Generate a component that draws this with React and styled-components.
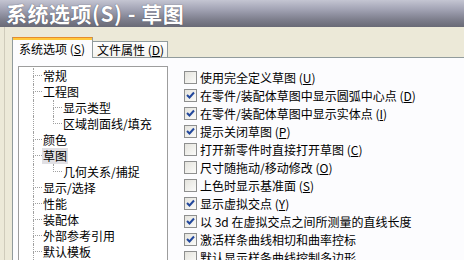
import React from 'react';
import styled, { createGlobalStyle } from 'styled-components';

const GlobalStyle = createGlobalStyle`
  html, body {
    margin: 0;
    padding: 0;
    overflow: hidden;
    background: #ece9d8;
  }
  body {
    font-family: "Noto Sans CJK SC", "Liberation Sans", sans-serif;
    font-size: 12px;
    color: #000;
  }
`;

const treeItems = [
  { label: '常规', level: 0 },
  { label: '工程图', level: 0 },
  { label: '显示类型', level: 1, more: true },
  { label: '区域剖面线/填充', level: 1 },
  { label: '颜色', level: 0 },
  { label: '草图', level: 0, selected: true },
  { label: '几何关系/捕捉', level: 1 },
  { label: '显示/选择', level: 0 },
  { label: '性能', level: 0 },
  { label: '装配体', level: 0 },
  { label: '外部参考引用', level: 0 },
  { label: '默认模板', level: 0 },
];

const options = [
  { label: '使用完全定义草图', key: 'U', checked: false },
  { label: '在零件/装配体草图中显示圆弧中心点', key: 'D', checked: true },
  { label: '在零件/装配体草图中显示实体点', key: 'I', checked: true },
  { label: '提示关闭草图', key: 'P', checked: true },
  { label: '打开新零件时直接打开草图', key: 'C', checked: false },
  { label: '尺寸随拖动/移动修改', key: 'O', checked: false },
  { label: '上色时显示基准面', key: 'S', checked: false },
  { label: '显示虚拟交点', key: 'Y', checked: true },
  { label: '以 3d 在虚拟交点之间所测量的直线长度', checked: true },
  { label: '激活样条曲线相切和曲率控标', checked: true },
  { label: '默认显示样条曲线控制多边形', checked: false },
];

function Check({ checked }) {
  return (
    <Box>
      {checked ? (
        <svg width="11" height="11" viewBox="0 0 11 11">
          <path d="M2 5 L4.5 7.5 L9 2.5" fill="none" stroke="#22479c" strokeWidth="2" />
        </svg>
      ) : null}
    </Box>
  );
}

function TreeRow({ item }) {
  return (
    <Row>
      {item.level === 1 ? <Guide /> : null}
      <Elbow>
        <ElbowTop />
        <ElbowBottom $open={item.level === 0 || item.more} />
      </Elbow>
      <Label $selected={item.selected}>{item.label}</Label>
    </Row>
  );
}

export default function App() {
  return (
    <Window>
      <GlobalStyle />
      <TitleBar>系统选项(S) - 草图</TitleBar>
      <Body>
        <TabRow>
          <Tab $active>
            系统选项 (<u>S</u>)
          </Tab>
          <Tab>
            文件属性 (<u>D</u>)
          </Tab>
        </TabRow>
        <Panel>
          <Tree>
            {treeItems.map(item => (
              <TreeRow key={item.label} item={item} />
            ))}
          </Tree>
          <Options>
            {options.map(opt => (
              <Option key={opt.label}>
                <Check checked={opt.checked} />
                <span>
                  {opt.label}
                  {opt.key ? (
                    <>
                      {' '}(<u>{opt.key}</u>)
                    </>
                  ) : null}
                </span>
              </Option>
            ))}
          </Options>
        </Panel>
      </Body>
    </Window>
  );
}

const Window = styled.div`
  width: 464px;
  height: 260px;
  display: flex;
  flex-direction: column;
  overflow: hidden;
  background: #ece9d8;
`;

const TitleBar = styled.div`
  flex: none;
  height: 27px;
  padding-left: 6px;
  background: linear-gradient(#c4c5d2, #a2a3b4 35%, #7b7c8a 75%, #696a76);
  color: #fff;
  font-size: 21px;
  font-weight: bold;
  line-height: 27px;
  letter-spacing: 0.5px;
  white-space: nowrap;
  text-shadow: 0 0 1px #3d3d48;
`;

const Body = styled.div`
  flex: 1;
  display: flex;
  flex-direction: column;
  margin-left: 4px;
  padding: 10px 0 0 7px;
  border-left: 1px solid #cfcbbb;
  min-height: 0;
`;

const TabRow = styled.div`
  flex: none;
  height: 20px;
  display: flex;
  align-items: flex-end;
`;

const Tab = styled.div`
  box-sizing: border-box;
  position: relative;
  white-space: nowrap;
  border: 1px solid #919b9c;
  border-bottom: none;
  ${p =>
    p.$active
      ? `
    z-index: 1;
    width: 81px;
    height: 21px;
    margin-bottom: -1px;
    padding-left: 6px;
    line-height: 19px;
    background: #fcfcfe;
    border-top: 1px solid #e68b2c;
    box-shadow: inset 0 2px 0 #ffc83c;
    padding-top: 1px;
  `
      : `
    width: 75px;
    height: 16px;
    padding-left: 4px;
    line-height: 15px;
    border-left: none;
    background: linear-gradient(#fefefe, #f4f3ee);
  `}
`;

const Panel = styled.div`
  flex: 1;
  display: flex;
  align-items: flex-start;
  padding: 8px 0 0 5px;
  background: #fcfcfe;
  border: 1px solid #919b9c;
  border-right: none;
  border-bottom: none;
  min-height: 0;
`;

const Tree = styled.div`
  box-sizing: border-box;
  flex: none;
  width: 150px;
  height: 220px;
  padding-top: 1px;
  background: #fff;
  border: 1px solid #9d9d9d;
  border-bottom: none;
`;

const Row = styled.div`
  height: 16px;
  display: flex;
  padding-left: 14px;
  line-height: 16px;
  white-space: nowrap;
`;

const Guide = styled.span`
  flex: none;
  width: 19px;
  border-left: 1px dotted #a0a0a0;
`;

const Elbow = styled.span`
  flex: none;
  width: 9px;
  display: flex;
  flex-direction: column;
`;

const ElbowTop = styled.span`
  height: 7px;
  border-left: 1px dotted #a0a0a0;
  border-bottom: 1px dotted #a0a0a0;
`;

const ElbowBottom = styled.span`
  flex: 1;
  border-left: 1px ${p => (p.$open ? 'dotted #a0a0a0' : 'none')};
`;

const Label = styled.span`
  padding: 0 1px;
  background: ${p => (p.$selected ? '#e1e0e4' : 'transparent')};
`;

const Options = styled.div`
  margin: 2px 0 0 16px;
  display: flex;
  flex-direction: column;
`;

const Option = styled.div`
  height: 18px;
  display: flex;
  align-items: center;
  gap: 3px;
  white-space: nowrap;
`;

const Box = styled.span`
  box-sizing: border-box;
  flex: none;
  width: 13px;
  height: 13px;
  display: flex;
  align-items: center;
  justify-content: center;
  border: 1px solid #8e8f8f;
  background: linear-gradient(135deg, #e4e3dd, #fbfbf9);
`;
